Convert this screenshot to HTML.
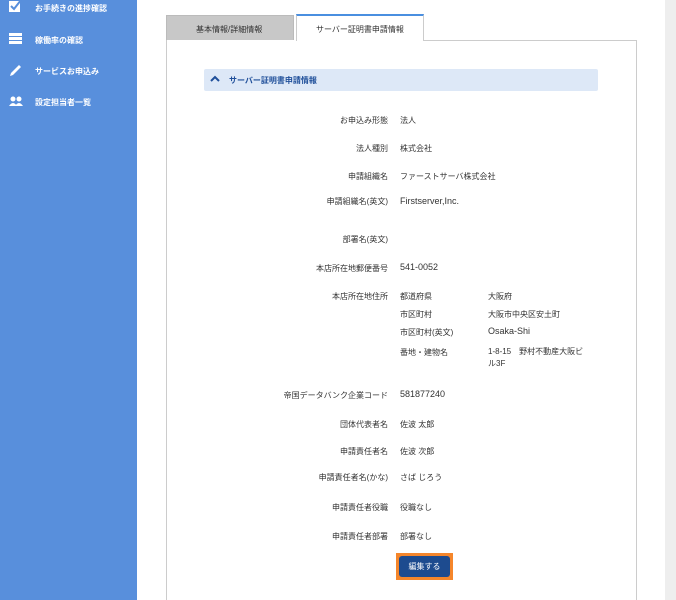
<html><head><style>
body{margin:0;width:676px;height:600px;position:relative;background:#fff;font-family:"Liberation Sans","Noto Sans CJK JP",sans-serif;font-size:8px;color:#333;overflow:hidden}
.sb{position:absolute;left:0;top:0;width:137px;height:600px;background:#588fdc}
.nav{position:absolute;left:35px;color:#fff;font-size:8px;font-weight:bold}
.ic{position:absolute;left:9px}
.gr{position:absolute;left:665px;top:0;width:11px;height:600px;background:#eeeeee}
.t{position:absolute;white-space:nowrap}
.l{position:absolute;right:288px;white-space:nowrap}
.v{position:absolute;left:400px;white-space:nowrap}
.n{font-size:9px}
</style></head><body>
<div class="sb">
<svg class="ic" style="top:0" width="14" height="13" viewBox="0 0 14 13"><rect x="0" y="1" width="11" height="11" fill="#fff"/><path d="M2 6l3 3 7-9" stroke="#588fdc" stroke-width="2" fill="none"/></svg>
<div class="nav" style="top:3px">お手続きの進捗確認</div>
<svg class="ic" style="top:33px" width="13" height="11"><rect y="0" width="13" height="3" fill="#fff"/><rect y="4" width="13" height="3" fill="#fff"/><rect y="8" width="13" height="3" fill="#fff"/></svg>
<div class="nav" style="top:35px">稼働率の確認</div>
<svg class="ic" style="top:64px" width="14" height="13"><path d="M1 12l3-1 8-8-2-2-8 8z" fill="#fff"/></svg>
<div class="nav" style="top:66px">サービスお申込み</div>
<svg class="ic" style="top:96px" width="14" height="10"><circle cx="4" cy="3" r="2.5" fill="#fff"/><circle cx="10" cy="3" r="2.5" fill="#fff"/><path d="M0 10q4-6 8 0zM6 10q4-6 8 0z" fill="#fff"/></svg>
<div class="nav" style="top:97px">設定担当者一覧</div>
</div>
<div class="gr"></div>
<div style="position:absolute;left:166px;top:15px;width:128px;height:25px;background:#c8c8c8;border:1px solid #bbb;border-bottom:none;box-sizing:border-box"></div>
<div class="t" style="left:196px;top:24px">基本情報/詳細情報</div>
<div style="position:absolute;left:296px;top:14px;width:128px;height:27px;background:#fff;border:1px solid #ccc;border-top:2px solid #4a8fe0;border-bottom:none;box-sizing:border-box"></div>
<div class="t" style="left:316px;top:24px">サーバー証明書申請情報</div>
<div style="position:absolute;left:424px;top:40px;width:213px;height:1px;background:#ccc"></div>
<div style="position:absolute;left:166px;top:40px;width:1px;height:560px;background:#ccc"></div>
<div style="position:absolute;left:636px;top:40px;width:1px;height:560px;background:#ccc"></div>
<div style="position:absolute;left:204px;top:69px;width:394px;height:22px;background:#dde8f7;border-radius:2px"></div>
<svg style="position:absolute;left:210px;top:75px" width="10" height="8"><path d="M1 6l4-4 4 4" stroke="#1f4f9a" stroke-width="2" fill="none"/></svg>
<div class="t" style="left:229px;top:75px;color:#1f4f9a;font-weight:bold">サーバー証明書申請情報</div>
<div class="l" style="top:115px">お申込み形態</div><div class="v" style="top:115px">法人</div>
<div class="l" style="top:143px">法人種別</div><div class="v" style="top:143px">株式会社</div>
<div class="l" style="top:171px">申請組織名</div><div class="v" style="top:171px">ファーストサーバ株式会社</div>
<div class="l" style="top:196px">申請組織名(英文)</div><div class="v n" style="top:196px">Firstserver,Inc.</div>
<div class="l" style="top:234px">部署名(英文)</div>
<div class="l" style="top:263px">本店所在地郵便番号</div><div class="v n" style="top:262px">541-0052</div>
<div class="l" style="top:291px">本店所在地住所</div><div class="v" style="top:291px">都道府県</div><div class="t" style="left:488px;top:291px">大阪府</div>
<div class="v" style="top:309px">市区町村</div><div class="t" style="left:488px;top:309px">大阪市中央区安土町</div>
<div class="v" style="top:327px">市区町村(英文)</div><div class="t n" style="left:488px;top:326px">Osaka-Shi</div>
<div class="v" style="top:347px">番地・建物名</div><div class="t" style="left:488px;top:346px;line-height:12px">1-8-15　野村不動産大阪ビ<br>ル3F</div>
<div class="l" style="top:390px">帝国データバンク企業コード</div><div class="v n" style="top:389px">581877240</div>
<div class="l" style="top:419px">団体代表者名</div><div class="v" style="top:419px">佐波 太郎</div>
<div class="l" style="top:446px">申請責任者名</div><div class="v" style="top:446px">佐波 次郎</div>
<div class="l" style="top:472px">申請責任者名(かな)</div><div class="v" style="top:472px">さば じろう</div>
<div class="l" style="top:502px">申請責任者役職</div><div class="v" style="top:502px">役職なし</div>
<div class="l" style="top:531px">申請責任者部署</div><div class="v" style="top:531px">部署なし</div>
<div style="position:absolute;left:396px;top:553px;width:57px;height:27px;background:#f5862b"></div>
<div style="position:absolute;left:399px;top:556px;width:51px;height:21px;background:#1d4b8f;border-radius:3px;color:#fff;text-align:center;line-height:21px">編集する</div>
</body></html>
